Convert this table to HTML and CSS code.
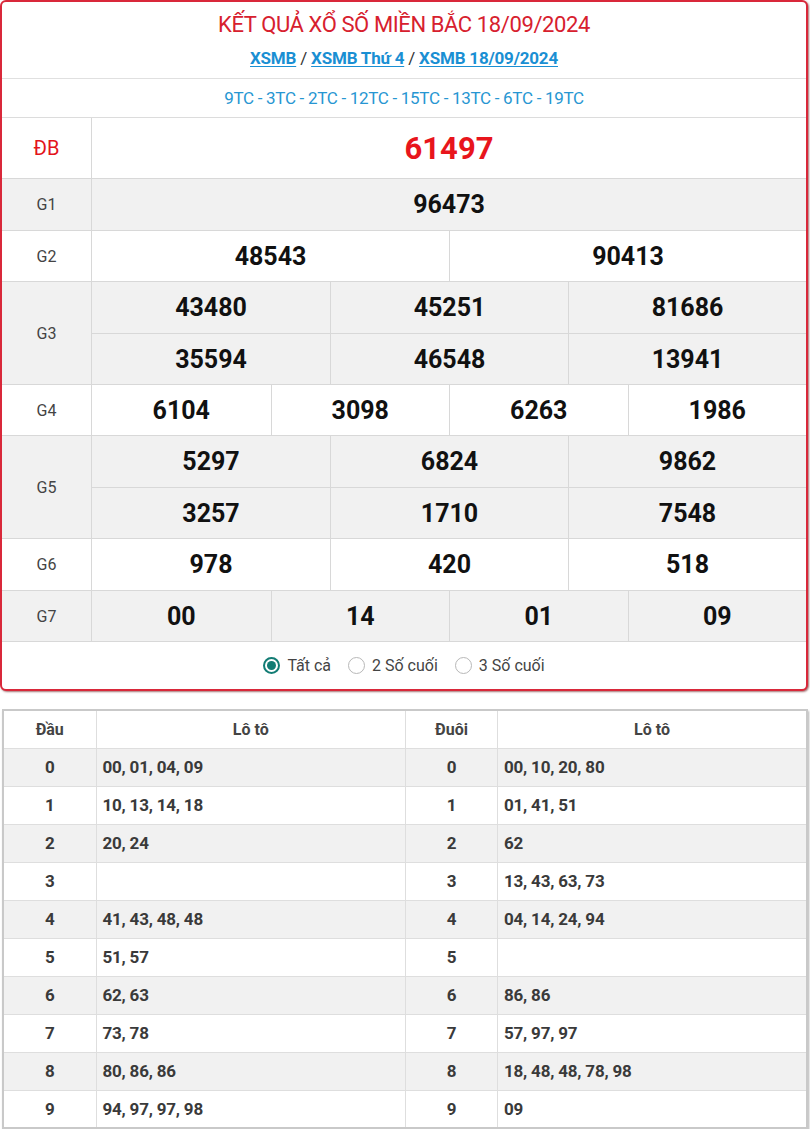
FILE: index.html
```html
<!DOCTYPE html>
<html lang="vi">
<head>
<meta charset="utf-8">
<link rel="stylesheet" href="styles.css">
</head>
<body>
<div class="card">
  <div class="head">
    <h1 class="title">KẾT QUẢ XỔ SỐ MIỀN BẮC 18/09/2024</h1>
    <div class="links"><a href="#">XSMB</a> <span class="sl">/</span> <a href="#">XSMB Thứ 4</a> <span class="sl">/</span> <a href="#">XSMB 18/09/2024</a></div>
  </div>
  <div class="codes">9TC - 3TC - 2TC - 12TC - 15TC - 13TC - 6TC - 19TC</div>
  <div class="prize db">
    <div class="lbl red">ĐB</div>
    <div class="nums c1"><div class="n special">61497</div></div>
  </div>
  <div class="prize gray tall">
    <div class="lbl">G1</div>
    <div class="nums c1"><div class="n">96473</div></div>
  </div>
  <div class="prize">
    <div class="lbl">G2</div>
    <div class="nums c2"><div class="n">48543</div><div class="n">90413</div></div>
  </div>
  <div class="prize gray tall">
    <div class="lbl">G3</div>
    <div class="nums c3"><div class="n">43480</div><div class="n">45251</div><div class="n">81686</div><div class="n">35594</div><div class="n">46548</div><div class="n">13941</div></div>
  </div>
  <div class="prize">
    <div class="lbl">G4</div>
    <div class="nums c4"><div class="n">6104</div><div class="n">3098</div><div class="n">6263</div><div class="n">1986</div></div>
  </div>
  <div class="prize gray tall">
    <div class="lbl">G5</div>
    <div class="nums c3"><div class="n">5297</div><div class="n">6824</div><div class="n">9862</div><div class="n">3257</div><div class="n">1710</div><div class="n">7548</div></div>
  </div>
  <div class="prize tall">
    <div class="lbl">G6</div>
    <div class="nums c3"><div class="n">978</div><div class="n">420</div><div class="n">518</div></div>
  </div>
  <div class="prize gray">
    <div class="lbl">G7</div>
    <div class="nums c4"><div class="n">00</div><div class="n">14</div><div class="n">01</div><div class="n">09</div></div>
  </div>
  <div class="radios">
    <label class="opt"><span class="rad on"></span>Tất cả</label>
    <label class="opt"><span class="rad"></span>2 Số cuối</label>
    <label class="opt"><span class="rad"></span>3 Số cuối</label>
  </div>
</div>

<table class="loto">
  <thead>
    <tr><th class="k">Đầu</th><th class="v">Lô tô</th><th class="k2">Đuôi</th><th class="v">Lô tô</th></tr>
  </thead>
  <tbody>
    <tr><td class="k">0</td><td>00, 01, 04, 09</td><td class="k">0</td><td>00, 10, 20, 80</td></tr>
    <tr><td class="k">1</td><td>10, 13, 14, 18</td><td class="k">1</td><td>01, 41, 51</td></tr>
    <tr><td class="k">2</td><td>20, 24</td><td class="k">2</td><td>62</td></tr>
    <tr><td class="k">3</td><td></td><td class="k">3</td><td>13, 43, 63, 73</td></tr>
    <tr><td class="k">4</td><td>41, 43, 48, 48</td><td class="k">4</td><td>04, 14, 24, 94</td></tr>
    <tr><td class="k">5</td><td>51, 57</td><td class="k">5</td><td></td></tr>
    <tr><td class="k">6</td><td>62, 63</td><td class="k">6</td><td>86, 86</td></tr>
    <tr><td class="k">7</td><td>73, 78</td><td class="k">7</td><td>57, 97, 97</td></tr>
    <tr><td class="k">8</td><td>80, 86, 86</td><td class="k">8</td><td>18, 48, 48, 78, 98</td></tr>
    <tr><td class="k">9</td><td>94, 97, 97, 98</td><td class="k">9</td><td>09</td></tr>
  </tbody>
</table>
</body>
</html>
```

FILE: styles.css
```css
* { box-sizing: border-box; }
html, body { margin: 0; padding: 0; background: #fff; }
body {
  font-family: Roboto, "Noto Sans", "Liberation Sans", sans-serif;
  color: #333;
  width: 810px;
}
.card {
  width: 808px;
  border: 2px solid #d9283a;
  border-radius: 6px;
  box-shadow: 1px 1px 2px rgba(90, 0, 0, 0.55);
  overflow: hidden;
  background: #fff;
}
.head {
  height: 77px;
  border-bottom: 1px solid #e0e0e0;
  text-align: center;
  padding-top: 9px;
}
.title {
  margin: 0;
  font-weight: 400;
  font-size: 22px;
  line-height: 28px;
  color: #d7202e;
  letter-spacing: -0.4px;
}
.links {
  margin-top: 9px;
  font-size: 17px;
  line-height: 20px;
  font-weight: 700;
  color: #333;
  letter-spacing: -0.2px;
}
.links a { color: #1a8fd3; text-decoration: underline; text-underline-offset: 2px; }
.links .sl { font-weight: 400; color: #333; }
.codes {
  height: 39px;
  line-height: 38px;
  text-align: center;
  font-size: 17px;
  color: #2796d2;
  border-bottom: 1px solid #dcdcdc;
  letter-spacing: -0.3px;
}
.prize {
  display: flex;
  border-bottom: 1px solid #d8d8d8;
  background: #fff;
}
.prize.gray { background: #f1f1f1; }
.lbl {
  width: 90px;
  flex: none;
  border-right: 1px solid #d8d8d8;
  display: flex;
  align-items: center;
  justify-content: center;
  font-size: 16px;
  color: #444;
}
.lbl.red { color: #e3141b; font-size: 20px; }
.nums {
  flex: 1;
  display: grid;
}
.c1 { grid-template-columns: 1fr; }
.c2 { grid-template-columns: repeat(2, 1fr); }
.c3 { grid-template-columns: repeat(3, 1fr); }
.c4 { grid-template-columns: repeat(4, 1fr); }
.n {
  height: 50px;
  display: flex;
  align-items: center;
  justify-content: center;
  font-size: 25px;
  font-weight: 700;
  color: #111;
  border-left: 1px solid #d8d8d8;
}
.tall .n { height: 51px; }
.c2 .n:nth-child(2n+1), .c3 .n:nth-child(3n+1), .c4 .n:nth-child(4n+1), .c1 .n { border-left: none; }
.c3 .n:nth-child(n+4) { border-top: 1px solid #d8d8d8; }
.db .n { height: 60px; }
.n.special { color: #e8151c; font-size: 31px; }
.radios {
  height: 47px;
  display: flex;
  align-items: center;
  justify-content: center;
  gap: 17px;
  font-size: 16px;
  color: #444;
}
.opt { display: flex; align-items: center; gap: 7px; }
.rad {
  width: 17px;
  height: 17px;
  border-radius: 50%;
  border: 1px solid #b8b8b8;
  background: #fff;
  position: relative;
}
.rad.on { border: 2px solid #127c74; }
.rad.on::after {
  content: "";
  position: absolute;
  left: 2px; top: 2px;
  width: 9px; height: 9px;
  border-radius: 50%;
  background: #127c74;
}
.loto {
  margin: 18px 0 0 2px;
  width: 806px;
  border-collapse: collapse;
  border: 2px solid #c9c9c9;
  box-shadow: 1px 2px 2px rgba(0,0,0,0.3);
  table-layout: fixed;
  font-size: 17px;
}
.loto th, .loto td {
  height: 38px;
  border: 1px solid #dedede;
  padding: 0 6px;
  color: #3a3a3a;
}
.loto th { font-weight: 700; font-size: 16px; text-align: center; color: #444; background: #fff; }
.loto th.k { width: 93px; }
.loto th.k2 { width: 92px; }
.loto td { font-weight: 700; text-align: left; letter-spacing: -0.2px; }
.loto td.k { text-align: center; }
.loto tbody tr:nth-child(odd) td { background: #f1f1f1; }
.loto tbody tr:nth-child(even) td { background: #fff; }
```
